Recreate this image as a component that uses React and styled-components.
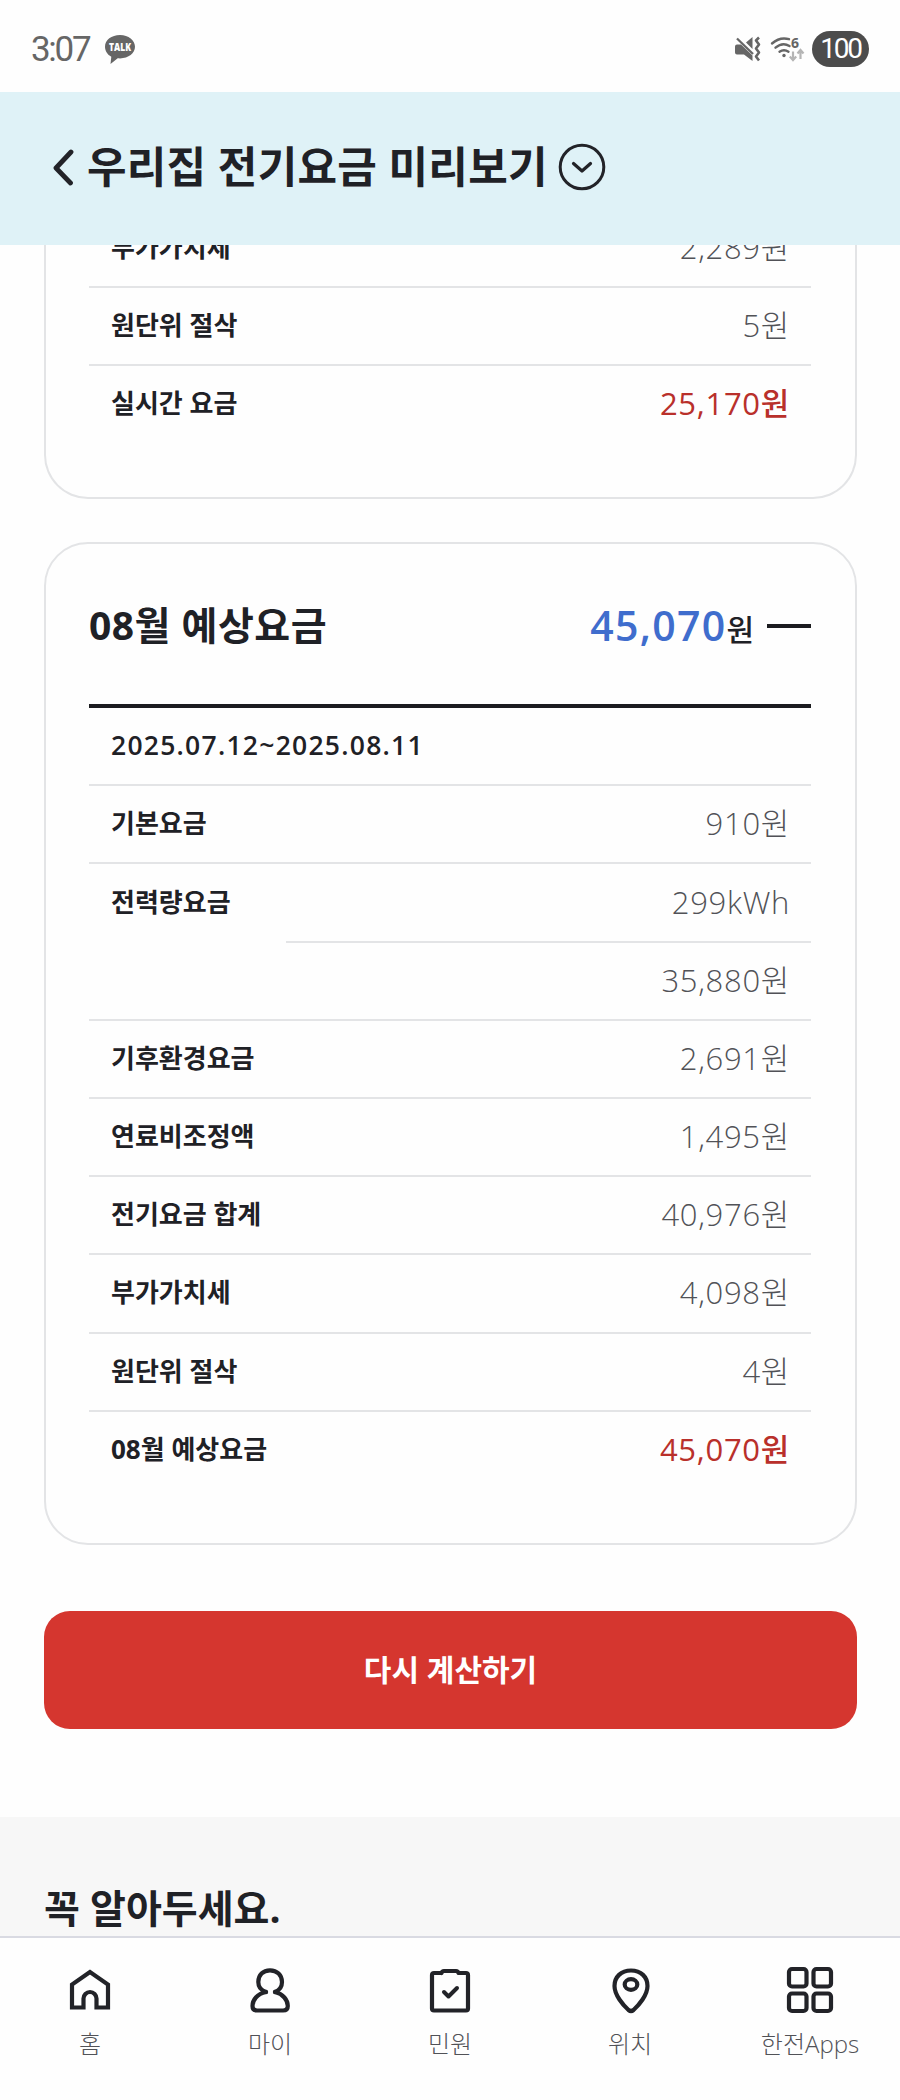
import React from 'react';
import styled, { createGlobalStyle } from 'styled-components';

const GlobalStyle = createGlobalStyle`
  * {
    box-sizing: border-box;
  }
  body {
    margin: 0;
    background: #fefefe;
    color: #1f2126;
    font-family: "Open Sans", "Noto Sans CJK KR", sans-serif;
  }
`

const Screen = styled.div`
  display: flex;
  flex-direction: column;
  width: 900px;
  height: 2100px;
  overflow: hidden;
  background: #fefefe;
`

/* status bar */
const StatusBar = styled.div`
  display: flex;
  align-items: center;
  flex: none;
  height: 92px;
  padding: 6px 31px 0 31px;
  color: #666;
`
const Clock = styled.span`
  width: 73px;
  padding-top: 2px;
  font-family: Roboto, sans-serif;
  font-size: 35px;
  line-height: 40px;
  letter-spacing: -2.3px;
`
const StatusIcons = styled.div`
  display: flex;
  align-items: center;
  gap: 8px;
  margin-left: auto;
`
const Battery = styled.span`
  width: 57px;
  height: 36px;
  border-radius: 18px;
  background: #4c4c4c;
  color: #fff;
  font-family: Roboto, sans-serif;
  font-size: 28px;
  line-height: 36px;
  letter-spacing: -2.3px;
  text-align: center;
`

/* page header */
const Header = styled.header`
  display: flex;
  align-items: center;
  flex: none;
  height: 153px;
  padding: 0 0 4px 52px;
  background: #dff2f7;
`
const Title = styled.h1`
  margin: 0 10px 0 12px;
  font-size: 43px;
  line-height: 60px;
  font-weight: 700;
  letter-spacing: 0.25px;
  white-space: nowrap;
`

/* scrolled content */
const Content = styled.main`
  flex: none;
  height: 1691px;
  overflow: hidden;
`
const Card = styled.section`
  width: 813px;
  margin: ${({ $cut }) => ($cut ? '-35.5px' : '42.5px')} 0 0 44px;
  padding: 0 44px 53px 43px;
  border: 2px solid #e3e4e6;
  border-top-width: ${({ $cut }) => ($cut ? 0 : '2px')};
  border-radius: ${({ $cut }) => ($cut ? '0 0 44px 44px' : '44px')};
`
const CardHead = styled.div`
  display: flex;
  align-items: center;
  height: 164.5px;
  padding-top: 3px;
  border-bottom: 4px solid #1b1c20;
`
const SectionTitle = styled.h2`
  margin: 0;
  font-size: 39px;
  line-height: 56px;
  font-weight: 700;
`
const CardTitle = styled(SectionTitle)`
  letter-spacing: 0.5px;
`
const Total = styled.div`
  display: flex;
  align-items: baseline;
  margin-left: auto;
  font-size: 30px;
  font-weight: 500;
`
const TotalNumber = styled.strong`
  color: #3f6dcd;
  font-size: 41px;
  line-height: 56px;
  font-weight: 650;
  letter-spacing: 1.3px;
`
const Minus = styled.span`
  width: 44px;
  height: 4px;
  margin: 2px 0 0 13px;
  background: #1b1c20;
`
const Row = styled.div`
  display: flex;
  align-items: center;
  height: 78.2px;
  padding: 0 21px 2px 22px;
  border-bottom: 2px solid ${({ $line }) => ($line ? '#e3e4e6' : 'transparent')};
`
const SplitRow = styled.div`
  display: grid;
  grid-template-columns: 197px 1fr;
  height: 156.4px;
  border-bottom: 2px solid #e3e4e6;
`
const Label = styled.span`
  font-size: 26px;
  line-height: 38px;
  font-weight: 700;
`
const Period = styled(Label)`
  font-weight: 600;
  font-size: 26.5px;
  letter-spacing: 1.25px;
`
const Value = styled.span`
  margin-left: auto;
  color: ${({ $red }) => ($red ? '#b9302b' : '#515257')};
  font-size: 31px;
  line-height: 42px;
  font-weight: ${({ $red }) => ($red ? 500 : 300)};
  letter-spacing: 0.7px;
`
const LabelCell = styled.div`
  display: flex;
  align-items: center;
  height: 76.2px;
  padding: 0 0 2px 22px;
`

const Retry = styled.button`
  display: block;
  width: 813px;
  height: 118px;
  margin: 66px 0 88px 44px;
  padding: 0 0 3px;
  border: 0;
  border-radius: 26px;
  background: #d5362f;
  color: #fff;
  font-family: inherit;
  font-size: 30px;
  font-weight: 700;
`
const Notice = styled.section`
  height: 200px;
  padding: 63px 44px;
  background: #f7f7f7;
`

/* bottom tabs */
const TabBar = styled.nav`
  display: grid;
  grid-template-columns: repeat(5, 1fr);
  flex: none;
  height: 164px;
  border-top: 2px solid #d9dae2;
`
const Tab = styled.a`
  display: flex;
  flex-direction: column;
  align-items: center;
  padding-top: 26px;
  color: #515257;
  font-size: 24px;
  line-height: 34px;
  font-weight: 300;

  svg {
    margin-bottom: 11px;
  }
`

const stroke = {
  fill: 'none',
  stroke: '#222328',
  strokeWidth: 4.2,
  strokeLinecap: 'round',
  strokeLinejoin: 'round',
}

const TalkIcon = () => (
  <svg width="32" height="32" viewBox="0 0 32 32">
    <path fill="#666" d="M16 2C7.500 2 1 7 1 13.800c0 4.400 2.500 7.800 6.300 10L6.500 31l7.200-5.700c.8.100 1.500.1 2.300.1 8.500 0 15-5.200 15-11.600S24.500 2 16 2z" />
    <text x="16" y="17.500" textAnchor="middle" textLength="22" lengthAdjust="spacingAndGlyphs" fill="#fff" fontFamily="Open Sans, sans-serif" fontSize="10" fontWeight="800">TALK</text>
  </svg>
)

const MuteIcon = () => (
  <svg width="28" height="28" viewBox="0 0 28 28">
    <path fill="#666" d="M3 9.500h4l11.500 11V26L10 19.500H3q-2 0-2-2v-6q0-2 2-2zM12 7.500l6.500-5.500v12z" />
    <path d="M3 3.500l16 15.500" stroke="#666" strokeWidth="2.300" />
    <path d="M25 2.500l-3 3 3 4-3 4 3 4-3 4 3 4" fill="none" stroke="#666" strokeWidth="2.600" strokeLinejoin="round" />
  </svg>
)

const WifiIcon = () => (
  <svg width="34" height="28" viewBox="0 0 34 28" overflow="visible">
    <g fill="none" stroke="#666" strokeWidth="2.400" strokeLinecap="round">
      <path d="M2 8.500Q10 1.500 19 4.200" />
      <path d="M5.500 12.700q7-6 14-1.700" />
      <path d="M9.500 16.700q4.500-3 9 0" />
    </g>
    <circle cx="14" cy="20.500" r="1.700" fill="#666" />
    <text x="21" y="13" fill="#666" fontFamily="Open Sans, sans-serif" fontSize="14" fontWeight="700">6</text>
    <path d="M23 16.500v8M19.800 21.500l3.200 3.500 3.200-3.500M30.500 24v-8M27.500 18.500l3-3.500 3 3.500" fill="none" stroke="#b5b5b5" strokeWidth="2.200" />
  </svg>
)

const BackIcon = () => (
  <svg width="23" height="38" viewBox="0 0 23 38">
    <path d="M19 4L4 20l14.500 15" {...stroke} strokeWidth="4.800" />
  </svg>
)

const MoreIcon = () => (
  <svg width="48" height="48" viewBox="0 0 48 48">
    <circle cx="24" cy="24" r="21.800" {...stroke} strokeWidth="3" />
    <path d="M15.500 20.500l8.500 7.500 8.500-7.500" {...stroke} strokeWidth="3.200" />
  </svg>
)

const HomeIcon = () => (
  <svg width="52" height="52" viewBox="0 0 52 52">
    <path d="M26 8L8 20.500V43.500H19.500V34.500a6.500 6.500 0 0 1 13 0V43.500H44V20.500z" {...stroke} strokeLinejoin="miter" />
  </svg>
)

const MyIcon = () => (
  <svg width="52" height="52" viewBox="0 0 52 52">
    <path d="M22 28C16 26 14.300 22 14.300 18C14.300 11 19 6.300 26 6.300S38 11 38 18C38 22 36 26 31 28" {...stroke} />
    <path d="M22 28C13 30 8.500 36 8.500 42Q8.500 46.500 13 46.500H39Q43.800 46.500 43.800 42C43.800 36 39 30 31 28" {...stroke} />
  </svg>
)

const ComplaintIcon = () => (
  <svg width="52" height="52" viewBox="0 0 52 52">
    <path d="M17.500 9H10Q8 9 8 11V44.500Q8 46.500 10 46.500H42Q44 46.500 44 44.500V11Q44 9 42 9H34.500Q34 7 32 7H20Q18 7 17.500 9" {...stroke} />
    <path d="M20 28l4.500 4.500 8.500-8.500" {...stroke} strokeWidth="4" />
  </svg>
)

const PlaceIcon = () => (
  <svg width="52" height="52" viewBox="0 0 52 52">
    <path d="M27 6.500C17 6.500 10.500 13 10.500 22C10.500 31 19 41 24.500 46Q27 48 29.500 46C35 41 43.500 31 43.500 22C43.500 13 37 6.500 27 6.500z" {...stroke} />
    <ellipse cx="27" cy="20.500" rx="6.300" ry="5.300" {...stroke} />
  </svg>
)

const AppsIcon = () => (
  <svg width="52" height="52" viewBox="0 0 52 52">
    {[5, 29.5].map((y) => [5, 29.5].map((x) => (
      <rect key={`${x}-${y}`} x={x} y={y} width="17.500" height="17.500" rx="3" {...stroke} />
    )))}
  </svg>
)

const realtime = [
  ['부가가치세', '2,289원'],
  ['원단위 절삭', '5원'],
  ['실시간 요금', '25,170원'],
]

const charges = [
  ['기후환경요금', '2,691원'],
  ['연료비조정액', '1,495원'],
  ['전기요금 합계', '40,976원'],
  ['부가가치세', '4,098원'],
  ['원단위 절삭', '4원'],
  ['08월 예상요금', '45,070원'],
]

const tabs = [
  ['홈', HomeIcon],
  ['마이', MyIcon],
  ['민원', ComplaintIcon],
  ['위치', PlaceIcon],
  ['한전Apps', AppsIcon],
]

// the last row is the sum, it is red and has no line under it
const Rows = ({ items }) => items.map(([label, value], i) => {
  const last = i === items.length - 1
  return (
    <Row key={label} $line={!last}>
      <Label>{label}</Label>
      <Value $red={last}>{value}</Value>
    </Row>
  )
})

function App() {
  return (
    <Screen>
      <GlobalStyle />
      <StatusBar>
        <Clock>3:07</Clock>
        <TalkIcon />
        <StatusIcons>
          <MuteIcon />
          <WifiIcon />
          <Battery>100</Battery>
        </StatusIcons>
      </StatusBar>
      <Header>
        <BackIcon />
        <Title>우리집 전기요금 미리보기</Title>
        <MoreIcon />
      </Header>
      <Content>
        <Card $cut>
          <Rows items={realtime} />
        </Card>
        <Card>
          <CardHead>
            <CardTitle>08월 예상요금</CardTitle>
            <Total><TotalNumber>45,070</TotalNumber>원</Total>
            <Minus />
          </CardHead>
          <Row $line>
            <Period>2025.07.12~2025.08.11</Period>
          </Row>
          <Row $line>
            <Label>기본요금</Label>
            <Value>910원</Value>
          </Row>
          <SplitRow>
            <LabelCell><Label>전력량요금</Label></LabelCell>
            <div>
              <Row $line><Value>299kWh</Value></Row>
              <Row><Value>35,880원</Value></Row>
            </div>
          </SplitRow>
          <Rows items={charges} />
        </Card>
        <Retry>다시 계산하기</Retry>
        <Notice>
          <SectionTitle>꼭 알아두세요.</SectionTitle>
        </Notice>
      </Content>
      <TabBar>
        {tabs.map(([name, Icon]) => (
          <Tab key={name}>
            <Icon />
            {name}
          </Tab>
        ))}
      </TabBar>
    </Screen>
  );
}

export default App;
